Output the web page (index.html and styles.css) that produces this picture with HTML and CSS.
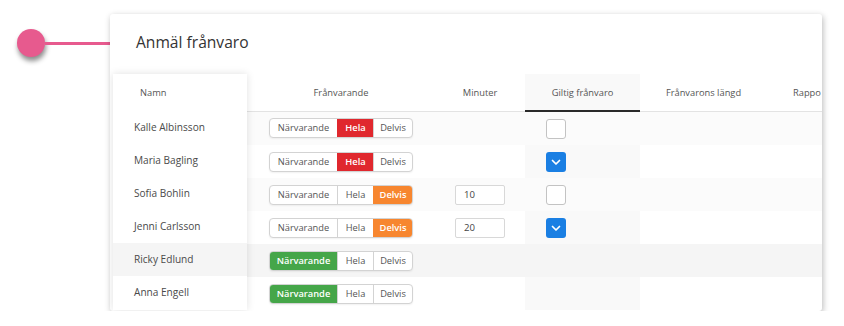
FILE: index.html
```html
<!DOCTYPE html>
<html lang="sv">
<head>
    <meta charset="UTF-8">
    <title>Anmäl frånvaro</title>
    <link rel="stylesheet" href="styles.css">
</head>
<body>
    <div class="marker">
        <div class="dot"></div>
        <div class="line"></div>
    </div>
    <div class="card">
        <h2 class="title">Anmäl frånvaro</h2>
        <div class="sheet">
            <div class="names">
                <div class="name-head">Namn</div>
                <div class="name">Kalle Albinsson</div>
                <div class="name">Maria Bagling</div>
                <div class="name">Sofia Bohlin</div>
                <div class="name">Jenni Carlsson</div>
                <div class="name hover">Ricky Edlund</div>
                <div class="name">Anna Engell</div>
            </div>
            <table class="grid">
                <thead>
                    <tr>
                        <th class="c-abs">Frånvarande</th>
                        <th class="c-min">Minuter</th>
                        <th class="c-valid">Giltig frånvaro</th>
                        <th class="c-len">Frånvarons längd</th>
                        <th class="c-rep">Rappo</th>
                    </tr>
                </thead>
                <tbody>
                    <tr class="odd">
                        <td class="c-abs"><div class="seg"><span>Närvarande</span><span class="on red">Hela</span><span>Delvis</span></div></td>
                        <td class="c-min"></td>
                        <td class="c-valid"><span class="box"></span></td>
                        <td></td><td></td>
                    </tr>
                    <tr>
                        <td class="c-abs"><div class="seg"><span>Närvarande</span><span class="on red">Hela</span><span>Delvis</span></div></td>
                        <td class="c-min"></td>
                        <td class="c-valid"><span class="box checked"><svg viewBox="0 0 20 20" width="20" height="20"><path d="M6.5 8.5 L10 12 L13.5 8.5" fill="none" stroke="#fff" stroke-width="1.7" stroke-linecap="round" stroke-linejoin="round"/></svg></span></td>
                        <td></td><td></td>
                    </tr>
                    <tr class="odd">
                        <td class="c-abs"><div class="seg"><span>Närvarande</span><span>Hela</span><span class="on orange">Delvis</span></div></td>
                        <td class="c-min"><input class="minutes" type="text" value="10"></td>
                        <td class="c-valid"><span class="box"></span></td>
                        <td></td><td></td>
                    </tr>
                    <tr>
                        <td class="c-abs"><div class="seg"><span>Närvarande</span><span>Hela</span><span class="on orange">Delvis</span></div></td>
                        <td class="c-min"><input class="minutes" type="text" value="20"></td>
                        <td class="c-valid"><span class="box checked"><svg viewBox="0 0 20 20" width="20" height="20"><path d="M6.5 8.5 L10 12 L13.5 8.5" fill="none" stroke="#fff" stroke-width="1.7" stroke-linecap="round" stroke-linejoin="round"/></svg></span></td>
                        <td></td><td></td>
                    </tr>
                    <tr class="hover">
                        <td class="c-abs"><div class="seg"><span class="on green">Närvarande</span><span>Hela</span><span>Delvis</span></div></td>
                        <td class="c-min"></td>
                        <td class="c-valid"></td>
                        <td></td><td></td>
                    </tr>
                    <tr>
                        <td class="c-abs"><div class="seg"><span class="on green">Närvarande</span><span>Hela</span><span>Delvis</span></div></td>
                        <td class="c-min"></td>
                        <td class="c-valid"></td>
                        <td></td><td></td>
                    </tr>
                </tbody>
            </table>
        </div>
    </div>
</body>
</html>
```

FILE: styles.css
```css
body { margin: 0; padding: 14px 0 0 17px; background: #fff; font-family: "Open Sans", sans-serif; color: #444; display: flex; align-items: flex-start; }

.marker { display: flex; align-items: center; margin-top: 15px; }
.dot { width: 28px; height: 28px; border-radius: 50%; background: #e75a8e; box-shadow: 1px 4px 5px rgba(0,0,0,0.45); }
.line { width: 65px; height: 3px; background: #e75a8e; }

.card { width: 712px; height: 297px; background: #fff; border-radius: 3px; box-shadow: 1px 2px 6px rgba(0,0,0,0.28); overflow: hidden; }
.title { margin: 0; padding: 17px 26px 0; font-size: 15.6px; line-height: 22px; font-weight: 400; color: #333; }

.sheet { display: flex; margin: 21px 0 0 3px; }
.names { width: 134px; flex: none; background: #fff; box-shadow: 0 0 8px rgba(0,0,0,0.12); position: relative; z-index: 1; }
.name-head { height: 37px; line-height: 37px; padding-left: 27px; font-size: 9.3px; color: #555; }
.name { height: 33px; line-height: 33px; padding-left: 21px; font-size: 10.1px; color: #4a4a4a; }
.name.hover { background: #f5f5f5; }

.grid { border-collapse: collapse; table-layout: fixed; width: 700px; flex: none; }
.grid th { height: 36px; padding: 0; font-size: 9.3px; font-weight: 400; color: #555; border-bottom: 1px solid #e3e3e3; text-align: center; }
.grid td { height: 33px; padding: 0; }
.grid tr.odd td { background: #fbfbfb; }
.grid tr.hover td { background: #f5f5f5; }
.grid th.c-valid, .grid td.c-valid { background: #f9f9f9; }
.grid tr.hover td.c-valid { background: #f5f5f5; }
.grid th.c-valid { border-bottom: 2px solid #2a2a2a; }
.c-abs { width: 188px; }
.c-min { width: 90px; }
.c-valid { width: 115px; }
.c-len { width: 127px; }
.grid th.c-rep { text-align: left; padding-left: 26px; }

.seg { display: flex; margin-left: 22px; width: 144px; height: 20px; border: 1px solid #d3d3d3; border-radius: 4px; overflow: hidden; box-sizing: border-box; box-shadow: 0 1px 2px rgba(0,0,0,0.06); background: #fff; }
.seg span { font-size: 9.3px; line-height: 18px; color: #555; text-align: center; border-left: 1px solid #d3d3d3; }
.seg span:nth-child(1) { width: 67px; border-left: none; }
.seg span:nth-child(2) { width: 35px; }
.seg span:nth-child(3) { flex: 1; }
.seg .on { color: #fff; font-weight: 600; border-left-color: transparent; }
.seg .red { background: #e0282e; }
.seg .orange { background: #f7862f; }
.seg .green { background: #45a649; }

.minutes { display: block; margin-left: 20px; width: 50px; height: 20px; box-sizing: border-box; border: 1px solid #d8d8d8; border-radius: 2px; padding: 0 8px; font-family: "Open Sans", sans-serif; font-size: 9.6px; color: #444; background: #fff; }

.box { display: block; margin-left: 21px; width: 20px; height: 20px; box-sizing: border-box; border: 1px solid #c3c3c3; border-radius: 3px; background: #fff; }
.box.checked { border: none; background: #1a7fe3; }
.box svg { display: block; }
```
